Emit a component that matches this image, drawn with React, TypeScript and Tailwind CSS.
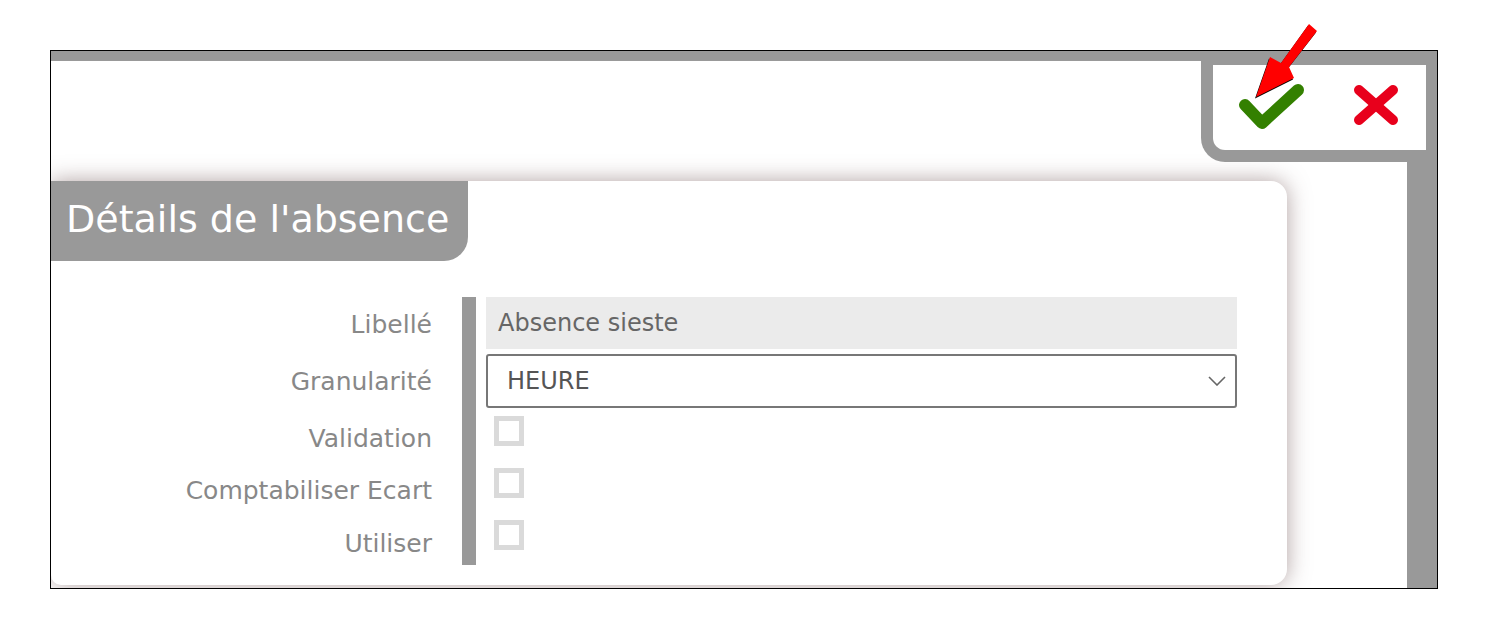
import React from 'react';

const font = { fontFamily: '"DejaVu Sans", "Liberation Sans", sans-serif' };

const Checkbox: React.FC = () => (
    <div className="ml-[8px] w-[30px] h-[30px] border-[5px] border-[#dadada] bg-white" />
);

const ToolbarIcons: React.FC = () => (
    <div className="absolute top-0 right-0 w-[236px] h-[111px] bg-[#999999] rounded-bl-[24px] pt-[14px] pl-[12px] pr-[11px] pb-[12px]">
        <div className="w-full h-full bg-white rounded-bl-[12px] relative">
            {/* validate */}
            <svg className="absolute left-[25px] top-[17px]" width="68" height="52" viewBox="0 0 68 52">
                <polyline points="7,23 24,41 60,8" fill="none" stroke="#338000" strokeWidth="12" strokeLinecap="round" strokeLinejoin="round" />
            </svg>
            {/* cancel */}
            <svg className="absolute left-[140px] top-[19px]" width="46" height="42" viewBox="0 0 46 42">
                <line x1="6" y1="6" x2="40" y2="36" stroke="#e8001c" strokeWidth="10" strokeLinecap="round" />
                <line x1="40" y1="6" x2="6" y2="36" stroke="#e8001c" strokeWidth="10" strokeLinecap="round" />
            </svg>
        </div>
    </div>
);

const Arrow: React.FC = () => (
    <svg className="absolute left-[1245px] top-[20px] pointer-events-none" width="76" height="84" viewBox="0 0 76 84">
        <g transform="translate(-1,1.5)" fill="#000">
            <polygon points="64,4 72,11 44,47 49,58 11,77 25,37 36,43" />
        </g>
        <polygon points="64,4 72,11 44,47 49,58 11,77 25,37 36,43" fill="#ff0000" />
    </svg>
);

const rows = [
    { label: 'Libellé' },
    { label: 'Granularité' },
    { label: 'Validation' },
    { label: 'Comptabiliser Ecart' },
    { label: 'Utiliser' },
];

export default function App() {
    return (
        <div className="w-full h-[639px] bg-white pt-[50px] pl-[50px] relative" style={font}>
            <div className="w-[1388px] h-[539px] border border-black relative overflow-hidden flex flex-col">
                <div className="h-[10px] bg-[#999999] shrink-0" />
                <div className="flex-1 flex">
                    <div className="flex-1 pt-[120px]">
                        {/* CARD */}
                        <div className="w-[1236px] h-[404px] bg-white rounded-tr-[16px] rounded-br-[16px] rounded-bl-[10px] shadow-[0_0_22px_rgba(100,70,70,0.5)]">
                            <div className="w-[417px] h-[80px] bg-[#999999] rounded-br-[24px] pl-[15px] flex items-center">
                                <h1 className="text-white text-[38px] leading-none pb-[4px]">Détails de l'absence</h1>
                            </div>

                            <div className="mt-[36px] grid grid-cols-[381px_775px] gap-x-[30px] text-[24px]">
                                {/* Libellé */}
                                <div className="h-[57px] flex justify-end items-start">
                                    <span className="h-[52px] pt-[3px] flex items-center text-[#888888] text-[25px]">{rows[0].label}</span>
                                </div>
                                <div className="border-l-[14px] border-[#999999] pl-[10px] h-[57px]">
                                    <div className="h-[52px] bg-[#ebebeb] flex items-center pl-[12px] text-[#666666]">Absence sieste</div>
                                </div>

                                {/* Granularité */}
                                <div className="h-[54px] pt-[2px] flex justify-end items-center text-[#888888] text-[25px]">{rows[1].label}</div>
                                <div className="border-l-[14px] border-[#999999] pl-[10px] h-[54px]">
                                    <div className="h-[54px] border-2 border-[#777777] rounded-[3px] flex items-center justify-between pl-[19px] pr-[9px] text-[#555555]">
                                        <span>HEURE</span>
                                        <svg width="18" height="10" viewBox="0 0 18 10">
                                            <polyline points="1,1 9,9 17,1" fill="none" stroke="#666666" strokeWidth="1.6" />
                                        </svg>
                                    </div>
                                </div>

                                {/* checkbox rows */}
                                {rows.slice(2).map((r, i) => (
                                    <React.Fragment key={r.label}>
                                        <div className={`${i === 2 ? 'h-[53px]' : 'h-[52px]'} flex justify-end items-center pt-[10px] text-[#888888] text-[25px]`}>{r.label}</div>
                                        <div className={`border-l-[14px] border-[#999999] pl-[10px] pt-[8px] ${i === 2 ? 'h-[53px]' : 'h-[52px]'}`}>
                                            <Checkbox />
                                        </div>
                                    </React.Fragment>
                                ))}
                            </div>
                        </div>
                    </div>
                    <div className="w-[30px] bg-[#999999] shrink-0" />
                </div>
                <ToolbarIcons />
            </div>
            <Arrow />
        </div>
    );
}
